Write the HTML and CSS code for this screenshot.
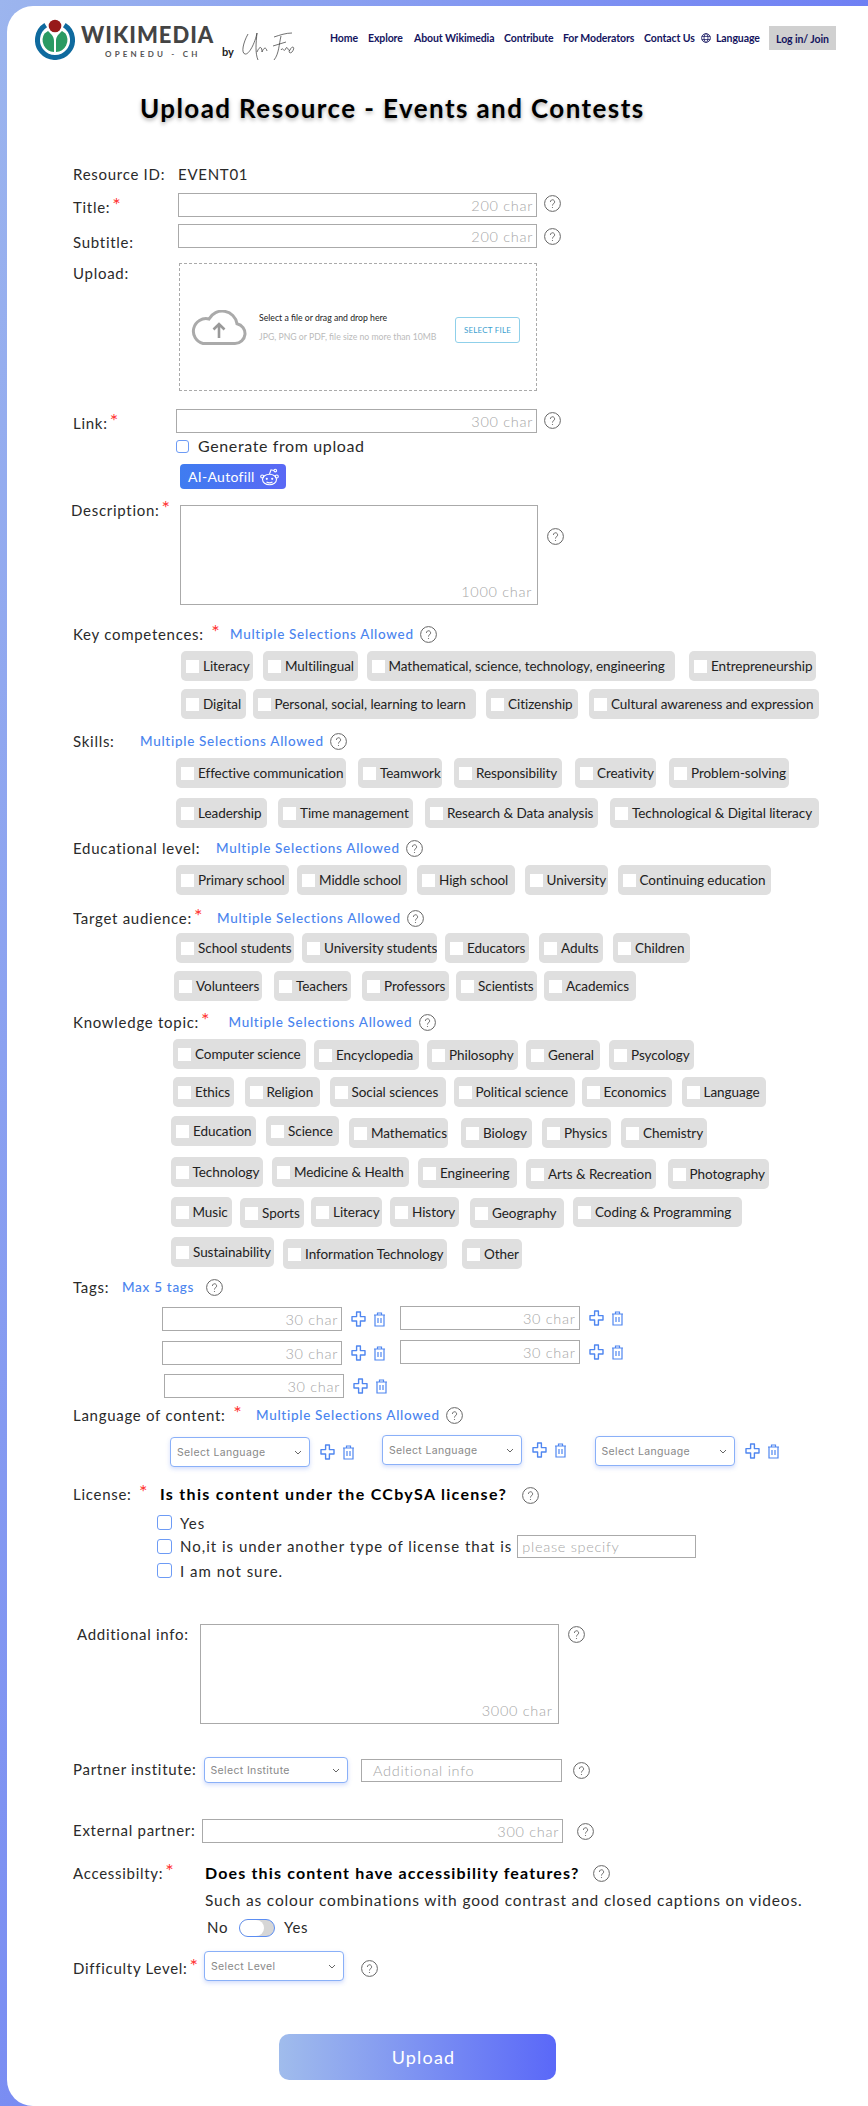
FILE: index.html
```html
<!DOCTYPE html>
<html lang="en">
<head>
<meta charset="utf-8">
<title>Upload Resource - Events and Contests</title>
<link rel="stylesheet" href="styles.css">
</head>
<body>
<svg class="sprite" xmlns="http://www.w3.org/2000/svg">
  <symbol id="i-help" viewBox="0 0 17 17">
    <circle cx="8.5" cy="8.5" r="7.9" fill="none" stroke="#666" stroke-width="1"/>
    <path d="M6.4 6.9a2.1 2.1 0 1 1 3.3 1.7c-.8.5-1.2 1-1.2 1.9" fill="none" stroke="#666" stroke-width="1"/>
    <circle cx="8.5" cy="12.5" r=".6" fill="#666"/>
  </symbol>
  <symbol id="i-plus" viewBox="0 0 15 16">
    <path d="M5.6 1h3.8v4.6H14v4.4H9.4v5H5.6v-5H1V5.6h4.6z" fill="none" stroke="#4f86f0" stroke-width="1.4" stroke-linejoin="round"/>
  </symbol>
  <symbol id="i-trash" viewBox="0 0 13 15">
    <path d="M1 3h11M4.5 3V1h4v2M2 3v11h9V3M5 6v5M8 6v5" fill="none" stroke="#4f86f0" stroke-width="1.2"/>
  </symbol>
  <symbol id="i-chev" viewBox="0 0 8 5">
    <path d="M1 1l3 3 3-3" fill="none" stroke="#666" stroke-width="1"/>
  </symbol>
</svg>

<div class="panel">
  <header class="header">
    <svg class="logo-mark" viewBox="0 0 40 41" xmlns="http://www.w3.org/2000/svg" aria-label="Wikimedia logo">
      <circle cx="20" cy="7" r="6.3" fill="#971a1a"/>
      <path d="M10.7 6.2A17.5 17.5 0 1 0 29.3 6.2" fill="none" stroke="#0f6a9e" stroke-width="5"/>
      <path d="M19 33A12 12 0 0 1 9.5 14.5L13 12C16 15 19 17 19 22zM21 33A12 12 0 0 0 30.5 14.5L27 12C24 15 21 17 21 22z" fill="#2a9a63"/>
    </svg>
    <div class="logo-text">
      <div class="logo-name">WIKIMEDIA</div>
      <div class="logo-sub">OPENEDU - CH</div>
    </div>
    <div class="logo-by">by</div>
    <svg class="signature" viewBox="0 0 56 30" xmlns="http://www.w3.org/2000/svg" aria-label="UniFire signature">
      <path d="M8 3C3 12 1 22 5 23C9 24 15 12 17 2C16 12 15 22 18 29M17 21C20 14 22 16 22 21C24 16 26 16 27 20M34 6C40 4 46 2 52 2M41 5C39 13 39 23 34 29M33 15L46 11M41 19C43 15 44 23 46 17C48 15 48 21 50 19C52 14 56 16 52 21C50 23 48 21 50 19" fill="none" stroke="#333" stroke-width=".7"/>
    </svg>
    <nav class="nav">
      <a>Home</a><a>Explore</a><a>About Wikimedia</a><a>Contribute</a><a>For Moderators</a><a>Contact Us</a>
      <svg class="globe" viewBox="0 0 10 10" xmlns="http://www.w3.org/2000/svg"><g fill="none" stroke="#14145e" stroke-width=".8"><circle cx="5" cy="5" r="4.4"/><ellipse cx="5" cy="5" rx="2" ry="4.4"/><path d="M.8 3.4h8.4M.8 6.6h8.4"/></g></svg>
      <a>Language</a>
      <a class="login">Log in/ Join</a>
    </nav>
  </header>

  <h1 class="page-title">Upload Resource - Events and Contests</h1>

  <div class="row r-res"><div class="label w-res">Resource ID:</div><div class="label">EVENT01</div></div>

  <div class="row r-title">
    <div class="label w-res lower">Title:<span class="star">*</span></div>
    <div class="field f-main"><span>200 char</span></div>
    <svg class="help h-main"><use href="#i-help"/></svg>
  </div>
  <div class="row r-sub">
    <div class="label w-res low2">Subtitle:</div>
    <div class="field f-main"><span>200 char</span></div>
    <svg class="help h-main"><use href="#i-help"/></svg>
  </div>

  <div class="row top r-upload">
    <div class="label w-up">Upload:</div>
    <div class="dropzone">
      <svg class="cloud" viewBox="0 0 56 35" xmlns="http://www.w3.org/2000/svg">
        <path d="M12 33.5h32a10 10 0 0 0 2-19.8A15 15 0 0 0 18 9 12.5 12.5 0 0 0 12 33.5z" fill="none" stroke="#aaa" stroke-width="3"/>
        <path d="M28 28V14M22.5 19.5l5.500-5.500 5.500 5.500" fill="none" stroke="#999" stroke-width="2.600"/>
      </svg>
      <div class="drop-text">
        <div class="drop-main">Select a file or drag and drop here</div>
        <div class="drop-note">JPG, PNG or PDF, file size no more than 10MB</div>
      </div>
      <div class="select-file">SELECT FILE</div>
    </div>
  </div>

  <div class="row r-link">
    <div class="label w-link lower">Link:<span class="star">*</span></div>
    <div class="field f-link"><span>300 char</span></div>
    <svg class="help h-main"><use href="#i-help"/></svg>
  </div>
  <div class="row r-gen"><span class="cb cb-small"></span><span class="gen-text">Generate from upload</span></div>
  <div class="row r-ai">
    <div class="ai-btn">AI-Autofill
      <svg class="bot" viewBox="0 0 19 18" xmlns="http://www.w3.org/2000/svg">
        <g fill="none" stroke="#fff" stroke-width="1.100">
          <ellipse cx="9.500" cy="11.500" rx="7" ry="5.300"/>
          <circle cx="2.200" cy="8.500" r="1.500"/><circle cx="16.800" cy="8.500" r="1.500"/>
          <path d="M9.500 6L11 1.800l3 .7"/><circle cx="15.300" cy="2.600" r="1.300"/>
          <path d="M6.500 14c1.800 1.100 4.200 1.100 6 0"/>
        </g>
        <circle cx="6.800" cy="10.800" r="1.100" fill="#fff"/><circle cx="12.200" cy="10.800" r="1.100" fill="#fff"/>
      </svg>
    </div>
  </div>

  <div class="row top r-desc">
    <div class="label w-desc">Description:<span class="star">*</span></div>
    <div class="area a-desc"><span>1000 char</span></div>
    <svg class="help h-desc"><use href="#i-help"/></svg>
  </div>

  <div class="row head r-key">
    <div class="label w-key">Key competences: <span class="star mid">*</span></div>
    <div class="hint">Multiple Selections Allowed</div>
    <svg class="help"><use href="#i-help"/></svg>
  </div>
  <div class="chips key1">
    <label class="chip"><i></i>Literacy</label><label class="chip"><i></i>Multilingual</label><label class="chip"><i></i>Mathematical, science, technology, engineering</label><label class="chip"><i></i>Entrepreneurship</label>
  </div>
  <div class="chips key2">
    <label class="chip"><i></i>Digital</label><label class="chip"><i></i>Personal, social, learning to learn</label><label class="chip"><i></i>Citizenship</label><label class="chip"><i></i>Cultural awareness and expression</label>
  </div>

  <div class="row head r-skills">
    <div class="label w-skills">Skills:</div>
    <div class="hint">Multiple Selections Allowed</div>
    <svg class="help"><use href="#i-help"/></svg>
  </div>
  <div class="chips sk1">
    <label class="chip"><i></i>Effective communication</label><label class="chip"><i></i>Teamwork</label><label class="chip"><i></i>Responsibility</label><label class="chip"><i></i>Creativity</label><label class="chip"><i></i>Problem-solving</label>
  </div>
  <div class="chips sk2">
    <label class="chip"><i></i>Leadership</label><label class="chip"><i></i>Time management</label><label class="chip"><i></i>Research &amp; Data analysis</label><label class="chip"><i></i>Technological &amp; Digital literacy</label>
  </div>

  <div class="row head r-edu">
    <div class="label w-edu">Educational level:</div>
    <div class="hint">Multiple Selections Allowed</div>
    <svg class="help"><use href="#i-help"/></svg>
  </div>
  <div class="chips edu">
    <label class="chip"><i></i>Primary school</label><label class="chip"><i></i>Middle school</label><label class="chip"><i></i>High school</label><label class="chip"><i></i>University</label><label class="chip"><i></i>Continuing education</label>
  </div>

  <div class="row head r-target">
    <div class="label w-target">Target audience:<span class="star">*</span></div>
    <div class="hint">Multiple Selections Allowed</div>
    <svg class="help"><use href="#i-help"/></svg>
  </div>
  <div class="chips ta1">
    <label class="chip"><i></i>School students</label><label class="chip"><i></i>University students</label><label class="chip"><i></i>Educators</label><label class="chip"><i></i>Adults</label><label class="chip"><i></i>Children</label>
  </div>
  <div class="chips ta2">
    <label class="chip"><i></i>Volunteers</label><label class="chip"><i></i>Teachers</label><label class="chip"><i></i>Professors</label><label class="chip"><i></i>Scientists</label><label class="chip"><i></i>Academics</label>
  </div>

  <div class="row head r-know">
    <div class="label w-know">Knowledge topic:<span class="star">*</span></div>
    <div class="hint">Multiple Selections Allowed</div>
    <svg class="help"><use href="#i-help"/></svg>
  </div>
  <div class="chips k1">
    <label class="chip"><i></i>Computer science</label><label class="chip down1"><i></i>Encyclopedia</label><label class="chip down1"><i></i>Philosophy</label><label class="chip down1"><i></i>General</label><label class="chip down1"><i></i>Psycology</label>
  </div>
  <div class="chips k2">
    <label class="chip"><i></i>Ethics</label><label class="chip"><i></i>Religion</label><label class="chip"><i></i>Social sciences</label><label class="chip"><i></i>Political science</label><label class="chip"><i></i>Economics</label><label class="chip"><i></i>Language</label>
  </div>
  <div class="chips k3">
    <label class="chip"><i></i>Education</label><label class="chip"><i></i>Science</label><label class="chip down2"><i></i>Mathematics</label><label class="chip down2"><i></i>Biology</label><label class="chip down2"><i></i>Physics</label><label class="chip down2"><i></i>Chemistry</label>
  </div>
  <div class="chips k4">
    <label class="chip"><i></i>Technology</label><label class="chip"><i></i>Medicine &amp; Health</label><label class="chip down1"><i></i>Engineering</label><label class="chip down2"><i></i>Arts &amp; Recreation</label><label class="chip down2"><i></i>Photography</label>
  </div>
  <div class="chips k5">
    <label class="chip"><i></i>Music</label><label class="chip down1"><i></i>Sports</label><label class="chip"><i></i>Literacy</label><label class="chip"><i></i>History</label><label class="chip down1"><i></i>Geography</label><label class="chip"><i></i>Coding &amp; Programming</label>
  </div>
  <div class="chips k6">
    <label class="chip"><i></i>Sustainability</label><label class="chip down2"><i></i>Information Technology</label><label class="chip down2"><i></i>Other</label>
  </div>

  <div class="row head r-tags">
    <div class="label w-tags">Tags:</div>
    <div class="hint hint-tags">Max 5 tags</div>
    <svg class="help"><use href="#i-help"/></svg>
  </div>
  <div class="row tag-row r-t1">
    <div class="tag-group"><div class="field f-tag"><span>30 char</span></div><svg class="ic-plus"><use href="#i-plus"/></svg><svg class="ic-trash"><use href="#i-trash"/></svg></div>
    <div class="tag-group up"><div class="field f-tag"><span>30 char</span></div><svg class="ic-plus"><use href="#i-plus"/></svg><svg class="ic-trash"><use href="#i-trash"/></svg></div>
  </div>
  <div class="row tag-row r-t2">
    <div class="tag-group"><div class="field f-tag"><span>30 char</span></div><svg class="ic-plus"><use href="#i-plus"/></svg><svg class="ic-trash"><use href="#i-trash"/></svg></div>
    <div class="tag-group up"><div class="field f-tag"><span>30 char</span></div><svg class="ic-plus"><use href="#i-plus"/></svg><svg class="ic-trash"><use href="#i-trash"/></svg></div>
  </div>
  <div class="row tag-row r-t3">
    <div class="tag-group"><div class="field f-tag"><span>30 char</span></div><svg class="ic-plus"><use href="#i-plus"/></svg><svg class="ic-trash"><use href="#i-trash"/></svg></div>
  </div>

  <div class="row head r-lang">
    <div class="label w-lang">Language of content: <span class="star mid">*</span></div>
    <div class="hint">Multiple Selections Allowed</div>
    <svg class="help"><use href="#i-help"/></svg>
  </div>
  <div class="row r-langs">
    <div class="lang-group l1"><div class="select s-lang">Select Language<svg class="chev"><use href="#i-chev"/></svg></div><svg class="ic-plus"><use href="#i-plus"/></svg><svg class="ic-trash"><use href="#i-trash"/></svg></div>
    <div class="lang-group"><div class="select s-lang">Select Language<svg class="chev"><use href="#i-chev"/></svg></div><svg class="ic-plus"><use href="#i-plus"/></svg><svg class="ic-trash"><use href="#i-trash"/></svg></div>
    <div class="lang-group l3"><div class="select s-lang">Select Language<svg class="chev"><use href="#i-chev"/></svg></div><svg class="ic-plus"><use href="#i-plus"/></svg><svg class="ic-trash"><use href="#i-trash"/></svg></div>
  </div>

  <div class="row head r-lic">
    <div class="label w-lic">License: <span class="star mid">*</span></div>
    <div class="question">Is this content under the CCbySA license?</div>
    <svg class="help h-q"><use href="#i-help"/></svg>
  </div>
  <div class="row opt r-yes"><span class="cb"></span><span class="opt-text">Yes</span></div>
  <div class="row opt r-no"><span class="cb"></span><span class="opt-text">No,it is under another type of license that is</span><div class="field f-specify"><span>please specify</span></div></div>
  <div class="row opt r-unsure"><span class="cb"></span><span class="opt-text">I am not sure.</span></div>

  <div class="row top r-add">
    <div class="label w-add">Additional info:</div>
    <div class="area a-add"><span>3000 char</span></div>
    <svg class="help h-add"><use href="#i-help"/></svg>
  </div>

  <div class="row r-partner">
    <div class="label w-partner">Partner institute:</div>
    <div class="select s-inst">Select Institute<svg class="chev"><use href="#i-chev"/></svg></div>
    <div class="field f-info"><span>Additional info</span></div>
    <svg class="help h-info"><use href="#i-help"/></svg>
  </div>
  <div class="row r-ext">
    <div class="label w-ext">External partner:</div>
    <div class="field f-ext"><span>300 char</span></div>
    <svg class="help h-ext"><use href="#i-help"/></svg>
  </div>

  <div class="row head r-acc">
    <div class="label w-acc">Accessibilty:<span class="star">*</span></div>
    <div class="question q-acc">Does this content have accessibility features?</div>
    <svg class="help h-acc"><use href="#i-help"/></svg>
  </div>
  <div class="row r-such"><div class="such">Such as colour combinations with good contrast and closed captions on videos.</div></div>
  <div class="row r-toggle">
    <span class="label w-no">No</span>
    <span class="toggle"></span>
    <span class="label yes">Yes</span>
  </div>

  <div class="row r-diff">
    <div class="label w-diff">Difficulty Level:<span class="star">*</span></div>
    <div class="select s-level">Select Level<svg class="chev"><use href="#i-chev"/></svg></div>
    <svg class="help h-diff"><use href="#i-help"/></svg>
  </div>

  <div class="upload-btn">Upload</div>
</div>
</body>
</html>
```

FILE: styles.css
```css
* { box-sizing: border-box; }
html, body { margin: 0; }
body {
  width: 868px;
  height: 2106px;
  padding: 6px 0 0 7px;
  overflow: hidden;
  background: linear-gradient(107deg, #9cb5ee, #4d58f8);
  font-family: "Lato", "Open Sans", sans-serif;
  color: #222;
}
.sprite { display: none; }
.panel {
  width: 861px;
  height: 2100px;
  background: #fff;
  border-radius: 26px 0 0 26px;
  overflow: hidden;
}

/* Header */
.header { display: flex; align-items: flex-start; height: 43px; margin: 13px 0 0 28px; }
.logo-mark { width: 40px; height: 41px; flex: none; }
.logo-text { margin-left: 6px; padding-top: 6px; width: 141px; flex: none; }
.logo-name { font-weight: 900; font-size: 22px; line-height: 20px; letter-spacing: 1px; color: #444; }
.logo-sub { font-weight: 700; font-size: 8px; line-height: 12px; letter-spacing: 3.2px; color: #555; margin: 3px 0 0 24px; white-space: nowrap; }
.logo-by { margin-top: 26px; font-weight: 700; font-size: 11px; line-height: 14px; color: #222; width: 18px; flex: none; }
.signature { width: 56px; height: 30px; margin-top: 12px; flex: none; }
.nav {
  display: grid;
  grid-template-columns: 38px 46px 90px 59px 81px 57px 15px 53px 67px;
  align-items: center;
  margin: 6px 0 0 34px;
  height: 25px;
  font-weight: 700;
  font-size: 10.500px;
  letter-spacing: -.1px;
  color: #14145e;
  white-space: nowrap;
}
.globe { width: 10px; height: 10px; }
.login { background: #d0d0d0; height: 24px; line-height: 26px; text-align: center; margin-top: 1px; }

.page-title {
  margin: 28px 0 0 133px;
  height: 36px;
  font-size: 26px;
  line-height: 36px;
  font-weight: 700;
  letter-spacing: 1.400px;
  color: #000;
  text-shadow: 0 2px 4px rgba(0, 0, 0, .35);
  white-space: nowrap;
}

/* Rows */
.row { display: flex; align-items: center; padding-left: 66px; }
.row.top { align-items: flex-start; }
.row.head { height: 20px; }
.label { font-size: 15px; line-height: 20px; letter-spacing: .72px; color: #2a2a2a; white-space: nowrap; flex: none; }
.star { color: #f33; font-size: 20px; vertical-align: 1px; line-height: 0; letter-spacing: 0; margin-left: 2px; }
.star.mid { margin-left: 3px; }
.lower { margin-top: 4px; }
.low2 { margin-top: 11px; }
.hint { width: 190px; flex: none; font-size: 13.500px; line-height: 20px; letter-spacing: .7px; font-weight: 500; color: #4a84ee; white-space: nowrap; }
.hint-tags { width: 84px; }
.help { width: 17px; height: 17px; flex: none; }
.h-main { margin-left: 7px; margin-top: -2px; }
.r-title .h-main { margin-top: -4px; }
.r-sub .h-main { margin-top: 1px; }
.h-desc { margin: 23px 0 0 9px; }
.h-q { margin-left: 15px; margin-top: 2px; }
.h-add { margin: 2px 0 0 9.500px; }
.h-info { margin-left: 11px; }
.h-ext { margin-left: 14px; }
.h-acc { margin-left: 14px; }
.h-diff { margin: 4px 0 0 16.500px; }

.field, .area {
  border: 1px solid #aaa;
  color: #a6a6a6;
  font-weight: 300;
  font-size: 14.500px;
  letter-spacing: .7px;
  flex: none;
  white-space: nowrap;
}
.field { height: 24px; display: flex; align-items: center; justify-content: flex-end; padding: 1px 3px 0 0; }
.area { display: flex; align-items: flex-end; justify-content: flex-end; padding: 0 5px 4px 0; }
.f-main { width: 359px; }
.f-link { width: 361px; margin-left: 0; }
.f-tag { width: 180px; }
.f-specify { width: 179px; height: 23px; justify-content: flex-start; padding-left: 4px; margin-left: 5px; }
.f-info { width: 201px; justify-content: flex-start; padding-left: 11px; margin-left: 13px; height: 23px; }
.f-ext { width: 361px; }
.a-desc { width: 358px; height: 100px; }
.a-add { width: 359px; height: 100px; }

.w-res { width: 105px; }
.w-up { width: 106px; margin-top: 0; }
.w-link { width: 103px; }
.w-desc { width: 109px; margin-left: -2px; margin-top: -5px; }
.w-key { width: 157px; }
.w-skills { width: 67px; }
.w-edu { width: 143px; }
.w-target { width: 144px; }
.w-know { width: 155.500px; }
.w-tags { width: 49px; }
.w-lang { width: 183px; }
.w-lic { width: 87px; }
.w-add { width: 122.500px; margin-left: 4px; }
.w-partner { width: 130.500px; margin-top: -2px; }
.w-ext { width: 129px; margin-top: -2px; }
.w-acc { width: 132px; }
.w-no { width: 32px; }
.w-diff { width: 131px; margin-top: 3px; }
.yes { margin-left: 9px; }

.r-res { height: 18px; margin-top: 39px; }
.r-title { height: 24px; margin-top: 10px; }
.r-sub { height: 24px; margin-top: 7px; }
.r-upload { height: 128px; margin-top: 15px; }
.r-link { height: 24px; margin-top: 18px; }
.r-gen { height: 14px; margin-top: 6px; padding-left: 169px; }
.r-ai { height: 25px; margin-top: 11px; padding-left: 173px; }
.r-desc { height: 100px; margin-top: 16px; }
.r-key { margin-top: 19px; }
.r-skills { margin-top: 12px; }
.r-edu { margin-top: 10px; }
.r-target { margin-top: 13px; }
.r-know { margin-top: 11px; }
.r-tags { margin-top: 8px; }
.r-lang { margin-top: 7px; }
.r-lic { margin-top: 17px; }

/* Upload drop zone */
.dropzone {
  width: 358px;
  height: 128px;
  border: 1px dashed #aaa;
  display: flex;
  align-items: center;
  padding-left: 11px;
  flex: none;
}
.cloud { width: 56px; height: 35px; flex: none; }
.drop-text { margin-left: 12px; width: 196px; flex: none; }
.drop-main { font-size: 8.700px; line-height: 12px; color: #222; white-space: nowrap; }
.drop-note { font-size: 8.700px; line-height: 12px; color: #bbb; margin-top: 7px; white-space: nowrap; }
.select-file {
  width: 65px;
  height: 26px;
  margin-top: 6px;
  border: 1px solid #8fd0ea;
  border-radius: 3px;
  font-size: 8px;
  line-height: 24px;
  letter-spacing: .2px;
  text-align: center;
  color: #3aa0d0;
  flex: none;
}

/* Checkboxes */
.cb { width: 15px; height: 15px; border: 1.500px solid #6d9bf5; border-radius: 3px; flex: none; background: #fff; }
.cb-small { width: 13px; height: 13px; }
.gen-text { margin-left: 9px; font-size: 16px; letter-spacing: .62px; white-space: nowrap; line-height: 20px; color: #2a2a2a; }
.ai-btn {
  display: flex;
  align-items: center;
  width: 106px;
  height: 25px;
  padding-left: 8px;
  border-radius: 4px;
  background: linear-gradient(90deg, #3f7cf0, #5a68f5);
  color: #fff;
  font-size: 14px;
  letter-spacing: .3px;
  white-space: nowrap;
}
.bot { width: 19px; height: 18px; margin-left: 5px; flex: none; }

/* Chip rows */
.chips { display: grid; align-items: start; height: 30px; column-gap: 0; }
.chip {
  display: flex;
  align-items: center;
  height: 30px;
  padding-left: 5px;
  background: #dfdfdf;
  border-radius: 5px;
  font-size: 13.500px;
  letter-spacing: -.05px;
  color: #222;
  white-space: nowrap;
  overflow: hidden;
}
.chip i { width: 13px; height: 13px; margin-right: 4px; background: #fff; flex: none; }
.chip:nth-child(2) { grid-column: 3; }
.chip:nth-child(3) { grid-column: 5; }
.chip:nth-child(4) { grid-column: 7; }
.chip:nth-child(5) { grid-column: 9; }
.chip:nth-child(6) { grid-column: 11; }
.down1 { margin-top: 1px; }
.down2 { margin-top: 2px; }

.key1 { margin: 7px 0 0 174px; grid-template-columns: 72px 10px 95px 8.500px 308.500px 14px 127px; }
.key2 { margin: 8px 0 0 174px; grid-template-columns: 65px 6.500px 223.500px 10px 92px 11px 230px; }
.sk1 { margin: 7px 0 0 169px; grid-template-columns: 170px 12px 84px 12px 108px 13px 81px 13px 120px; }
.sk2 { margin: 10px 0 0 169px; grid-template-columns: 91px 11px 135px 12px 173px 12px 209px; }
.edu { margin: 7px 0 0 169px; grid-template-columns: 113px 8px 110px 10px 98px 9.500px 83.500px 9.500px 153.500px; }
.ta1 { margin: 5px 0 0 169px; grid-template-columns: 118px 8px 135px 8px 84px 10px 64px 10px 77px; }
.ta2 { margin: 8px 0 0 167px; grid-template-columns: 88px 12px 77px 11px 87px 7px 81px 7px 92px; }
.k1 { margin: 7px 0 0 166px; grid-template-columns: 133px 8px 105px 8px 91px 8px 74px 9px 85px; }
.k2 { margin: 8px 0 0 166px; grid-template-columns: 60.500px 11px 75.500px 9.500px 116.500px 7.500px 121px 7px 90px 10px 84px; }
.k3 { margin: 9px 0 0 164px; height: 32px; grid-template-columns: 85px 10px 73px 10px 99px 13px 71px 10px 69px 10px 86px; }
.k4 { margin: 9px 0 0 163.500px; height: 32px; grid-template-columns: 92.500px 9px 137px 9px 99px 9px 130px 11.500px 101.500px; }
.k5 { margin: 8px 0 0 163.500px; grid-template-columns: 61.500px 8px 64px 7px 71px 8px 69px 11px 94px 9px 169px; }
.k6 { margin: 10px 0 0 164px; height: 32px; grid-template-columns: 103px 9px 164px 15px 60px; }

/* Tags */
.tag-row { padding-left: 155px; height: 24px; }
.r-t1 { margin-top: 10px; }
.r-t2 { margin-top: 10px; }
.r-t3 { margin-top: 9px; padding-left: 157px; }
.tag-group { display: flex; align-items: center; width: 237.500px; flex: none; }
.tag-group.up { margin-top: -2px; }
.ic-plus { width: 15px; height: 16px; margin-left: 9px; flex: none; }
.ic-trash { width: 13px; height: 15px; margin-left: 7px; flex: none; }

/* Selects */
.select {
  display: flex;
  align-items: center;
  justify-content: space-between;
  height: 30px;
  padding: 0 7px 0 6px;
  background: #fff;
  border: 1px solid #8ab0f8;
  border-radius: 4px;
  box-shadow: 0 2px 4px rgba(80, 120, 240, .25);
  font-family: "Inter", "Lato", sans-serif;
  font-size: 10.500px;
  letter-spacing: .36px;
  color: #888;
  white-space: nowrap;
  flex: none;
}
.chev { width: 8px; height: 5px; flex: none; }
.s-lang { width: 140px; }
.s-inst { width: 144.500px; height: 26px; }
.s-level { width: 140px; }
.r-langs { height: 32px; margin-top: 10px; padding-left: 163px; align-items: flex-start; }
.lang-group { display: flex; align-items: center; width: 212.500px; flex: none; }
.lang-group .ic-plus { margin-left: 10px; }
.l1 { margin-top: 2px; width: 212px; }
.l3 { margin-top: 1px; }

/* License */
.question { font-weight: 700; font-size: 16px; line-height: 20px; letter-spacing: 1.300px; color: #000; white-space: nowrap; flex: none; }
.q-acc { letter-spacing: 1.150px; }
.opt { padding-left: 150px; }
.opt-text { margin-left: 8px; font-size: 15px; letter-spacing: 1px; white-space: nowrap; color: #2a2a2a; }
.r-yes { height: 15px; margin-top: 11px; }
.r-no { height: 24px; margin-top: 4px; }
.r-unsure { height: 15px; margin-top: 5px; }

.r-add { height: 100px; margin-top: 46px; }
.r-partner { height: 26px; margin-top: 33px; }
.r-ext { height: 24px; margin-top: 36px; }
.r-acc { margin-top: 20px; }
.r-such { height: 20px; margin-top: 7px; padding-left: 198px; }
.such { font-size: 15.500px; letter-spacing: .82px; line-height: 20px; color: #2a2a2a; white-space: nowrap; }
.r-toggle { height: 20px; margin-top: 7px; padding-left: 200px; }
.toggle {
  display: flex;
  width: 36px;
  height: 18px;
  margin-top: 2px;
  border: 1px solid #5b8df2;
  border-radius: 9px;
  background: #d6d6d6;
  overflow: hidden;
  flex: none;
}
.toggle::before { content: ""; width: 24px; background: #fff; border-radius: 9px; }
.r-diff { height: 30px; margin-top: 14px; }

.upload-btn {
  width: 277px;
  height: 46px;
  margin: 53px 0 0 272px;
  padding-left: 12px;
  border-radius: 10px;
  background: linear-gradient(90deg, #a0bcec, #5a68f8);
  color: #fff;
  font-size: 18px;
  line-height: 46px;
  letter-spacing: 1.200px;
  text-align: center;
}
```
